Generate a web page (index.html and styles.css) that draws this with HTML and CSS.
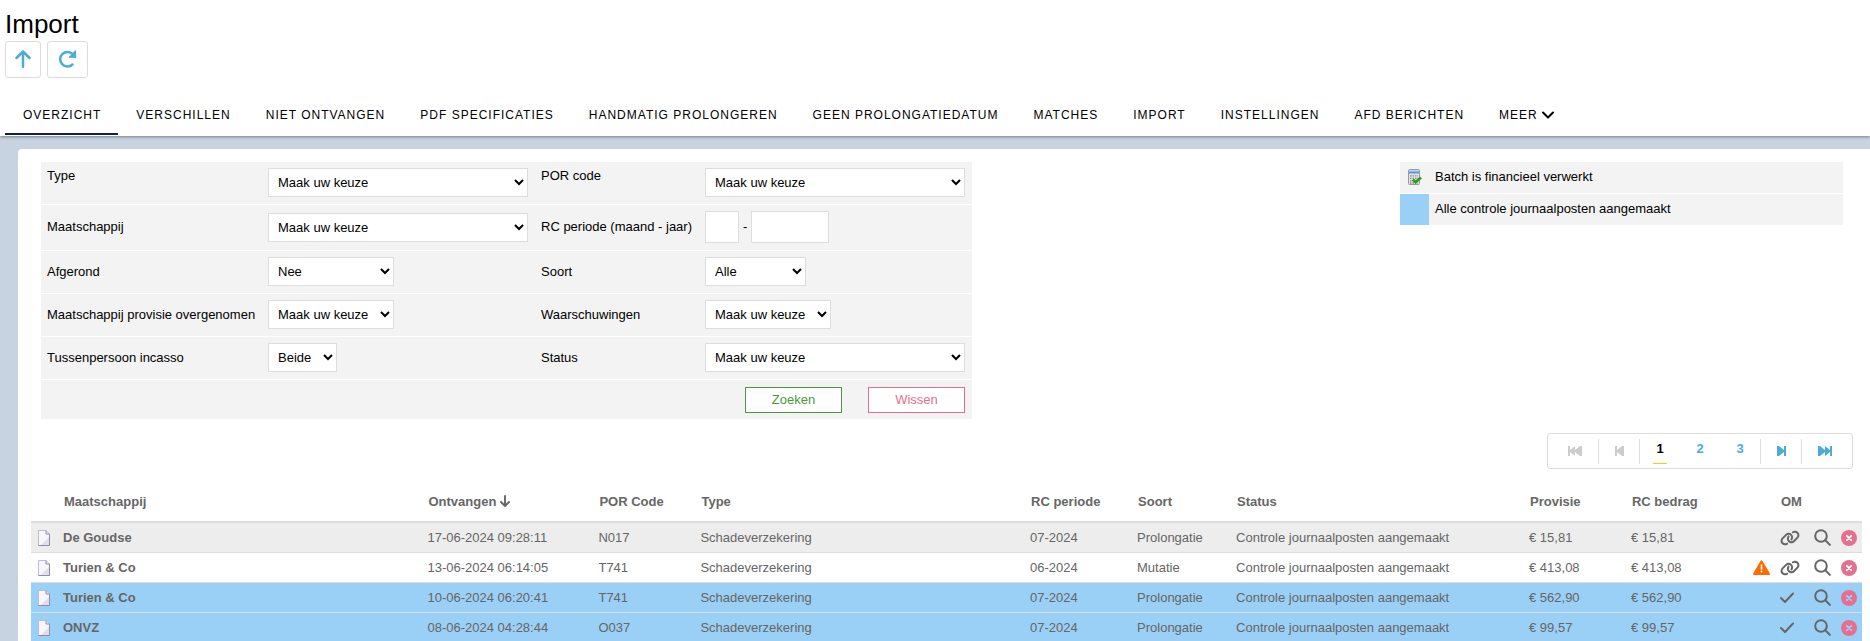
FILE: index.html
```html
<!DOCTYPE html>
<html lang="nl">
<head>
    <meta charset="UTF-8">
    <meta name="viewport" content="width=device-width, initial-scale=1.0">
    <title>Import</title>
    <link rel="stylesheet" href="styles.css">
</head>
<body>
    <svg class="symbols" aria-hidden="true">
        <symbol id="doc" viewBox="0 0 12 16">
            <path d="M.5.5h7.500l3.500 3.500v11.500H.5z" fill="#f6f6fb" stroke="#bdbbd0"/>
            <path d="M11 7v8H3z" fill="#dfdeea"/>
            <path d="M.5 15.500h11V4" fill="none" stroke="#8f8ba8"/>
            <path d="M8 .5V4h3.500" fill="none" stroke="#8f8ba8"/>
        </symbol>
        <symbol id="link" viewBox="0 0 640 512">
            <path fill="currentColor" d="M579.8 267.7c56.5-56.5 56.5-148 0-204.5c-50-50-128.8-56.5-186.3-15.4l-1.6 1.1c-14.4 10.3-17.7 30.3-7.4 44.6s30.3 17.7 44.6 7.4l1.6-1.1c32.1-22.9 76-19.3 103.8 8.6c31.5 31.5 31.5 82.5 0 114L422.3 334.8c-31.5 31.5-82.5 31.5-114 0c-27.9-27.9-31.5-71.8-8.6-103.8l1.1-1.6c10.3-14.4 6.9-34.4-7.4-44.6s-34.4-6.9-44.6 7.4l-1.1 1.6C206.5 251.2 213 330 263 380c56.5 56.5 148 56.5 204.5 0L579.8 267.7zM60.2 244.3c-56.5 56.5-56.5 148 0 204.5c50 50 128.8 56.5 186.3 15.4l1.6-1.1c14.4-10.3 17.7-30.3 7.4-44.6s-30.3-17.7-44.6-7.4l-1.6 1.1c-32.1 22.9-76 19.3-103.8-8.6C74 372 74 321 105.5 289.5L217.7 177.2c31.5-31.5 82.5-31.5 114 0c27.9 27.9 31.5 71.8 8.6 103.9l-1.1 1.6c-10.3 14.4-6.9 34.4 7.4 44.6s34.4 6.9 44.6-7.4l1.1-1.6C433.5 260.8 427 182 377 132c-56.5-56.5-148-56.5-204.5 0L60.2 244.3z"/>
        </symbol>
        <symbol id="search" viewBox="0 0 17 17">
            <g fill="none" stroke="currentColor" stroke-width="2" stroke-linecap="round">
                <circle cx="7" cy="7" r="5.8"/>
                <path d="M11.3 11.3l4.6 4.6"/>
            </g>
        </symbol>
        <symbol id="check" viewBox="0 0 14 11">
            <path d="M1 6l4 4 8-8.500" fill="none" stroke="currentColor" stroke-width="2" stroke-linecap="round" stroke-linejoin="round"/>
        </symbol>
        <symbol id="remove" viewBox="0 0 16 16">
            <circle cx="8" cy="8" r="8" fill="#e56f90"/>
            <path class="cross" d="M5.800 5.800l4.400 4.400M10.200 5.800l-4.400 4.400" stroke-width="1.800" stroke-linecap="round"/>
        </symbol>
        <symbol id="warning" viewBox="0 0 17 15">
            <path d="M8.500 1.200L16 14H1z" fill="#ff6b00" stroke="#ff6b00" stroke-width="2" stroke-linejoin="round"/>
            <path d="M8.500 5v4" stroke="#fff" stroke-width="1.600" stroke-linecap="round"/>
            <circle cx="8.500" cy="11.600" r="1" fill="#fff"/>
        </symbol>
    </svg>

    <div class="page">
        <header class="header">
            <h1>Import</h1>
            <div class="toolbar">
                <button type="button" class="tool" aria-label="Omhoog">
                    <svg width="16" height="18" viewBox="0 0 16 18"><path d="M8 16.800V1.500M1.500 8L8 1.500 14.500 8" fill="none" stroke="currentColor" stroke-width="2.500" stroke-linecap="round" stroke-linejoin="round"/></svg>
                </button>
                <button type="button" class="tool tool-wide" aria-label="Vernieuwen">
                    <svg width="19" height="18" viewBox="0 0 19 18"><path d="M14.500 14.500A7.300 7.300 0 1 1 14.800 4.200L17 6.500" fill="none" stroke="currentColor" stroke-width="2.500" stroke-linecap="round"/><path d="M17.500 1v6.200H11.500z" fill="currentColor" stroke="currentColor" stroke-width="1.200" stroke-linejoin="round"/></svg>
                </button>
            </div>
            <nav class="tabs">
                <a href="#" class="active">OVERZICHT</a>
                <a href="#">VERSCHILLEN</a>
                <a href="#">NIET ONTVANGEN</a>
                <a href="#">PDF SPECIFICATIES</a>
                <a href="#">HANDMATIG PROLONGEREN</a>
                <a href="#">GEEN PROLONGATIEDATUM</a>
                <a href="#">MATCHES</a>
                <a href="#">IMPORT</a>
                <a href="#">INSTELLINGEN</a>
                <a href="#">AFD BERICHTEN</a>
                <a href="#">MEER <svg width="12" height="8" viewBox="0 0 12 8"><path d="M1 1.500l5 5 5-5" fill="none" stroke="currentColor" stroke-width="2" stroke-linecap="round" stroke-linejoin="round"/></svg></a>
            </nav>
        </header>

        <main class="panel">
            <div class="top">
                <form class="filter">
                    <div class="row row-first">
                        <label for="type">Type</label>
                        <div><select id="type" class="wide"><option>Maak uw keuze</option></select></div>
                        <label for="por">POR code</label>
                        <div><select id="por" class="wide"><option>Maak uw keuze</option></select></div>
                    </div>
                    <div class="row">
                        <label for="maatschappij">Maatschappij</label>
                        <div><select id="maatschappij" class="wide"><option>Maak uw keuze</option></select></div>
                        <label for="maand">RC periode (maand - jaar)</label>
                        <div class="period"><input type="text" id="maand" class="month"><span>-</span><input type="text" class="year" aria-label="Jaar"></div>
                    </div>
                    <div class="row">
                        <label for="afgerond">Afgerond</label>
                        <div><select id="afgerond" class="medium"><option>Nee</option></select></div>
                        <label for="soort">Soort</label>
                        <div><select id="soort" class="small"><option>Alle</option></select></div>
                    </div>
                    <div class="row">
                        <label for="provisie">Maatschappij provisie overgenomen</label>
                        <div><select id="provisie" class="medium"><option>Maak uw keuze</option></select></div>
                        <label for="waarschuwingen">Waarschuwingen</label>
                        <div><select id="waarschuwingen" class="medium"><option>Maak uw keuze</option></select></div>
                    </div>
                    <div class="row">
                        <label for="incasso">Tussenpersoon incasso</label>
                        <div><select id="incasso" class="tiny"><option>Beide</option></select></div>
                        <label for="status">Status</label>
                        <div><select id="status" class="wide"><option>Maak uw keuze</option></select></div>
                    </div>
                    <div class="buttons">
                        <button type="button" class="btn btn-search">Zoeken</button>
                        <button type="button" class="btn btn-clear">Wissen</button>
                    </div>
                </form>

                <div class="legend">
                    <div class="legend-row">
                        <span class="legend-icon">
                            <svg width="14" height="16" viewBox="0 0 14 16">
                                <rect x=".5" y=".5" width="11" height="15" rx="1" fill="#e2e2e2" stroke="#9a9a9a"/>
                                <rect x="1" y="1" width="10" height="1.500" fill="#b9d3f2"/>
                                <rect x="1" y="2.500" width="10" height="2" fill="#5b96dc"/>
                                <path d="M2 6.800h8M2 9.300h8M2 11.800h8M2 14h8" stroke="#8a8a8a" stroke-width="1.300" stroke-dasharray="1.500 1"/>
                                <path d="M5 10.500l2.600 2.800L13 8.500" fill="none" stroke="#2f9a20" stroke-width="2.600"/>
                            </svg>
                        </span>
                        <span class="legend-text">Batch is financieel verwerkt</span>
                    </div>
                    <div class="legend-row">
                        <span class="legend-icon legend-blue"></span>
                        <span class="legend-text">Alle controle journaalposten aangemaakt</span>
                    </div>
                </div>
            </div>

            <div class="pager">
                <button type="button" class="edge" disabled aria-label="Eerste"><svg width="14" height="10" viewBox="0 0 14 10"><path d="M0 0h2v4L7 0v4l5-4h2v10h-2L7 6v4L2 6v4H0z" fill="currentColor"/></svg></button>
                <button type="button" class="step" disabled aria-label="Vorige"><svg width="9" height="10" viewBox="0 0 9 10"><path d="M0 0h2v4l5-4h2v10H7L2 6v4H0z" fill="currentColor"/></svg></button>
                <a href="#" class="current"><span>1</span></a>
                <a href="#"><span>2</span></a>
                <a href="#"><span>3</span></a>
                <button type="button" class="step" aria-label="Volgende"><svg width="9" height="10" viewBox="0 0 9 10"><path d="M9 0H7v4L2 0H0v10h2l5-4v4h2z" fill="currentColor"/></svg></button>
                <button type="button" class="edge" aria-label="Laatste"><svg width="14" height="10" viewBox="0 0 14 10"><path d="M14 0h-2v4L7 0v4L2 0H0v10h2l5-4v4l5-4v4h2z" fill="currentColor"/></svg></button>
            </div>

            <table class="results">
                <colgroup>
                    <col class="c-doc"><col><col class="c-date"><col class="c-num"><col class="c-type"><col class="c-period"><col class="c-kind"><col class="c-status"><col class="c-num"><col class="c-num"><col class="c-warn"><col class="c-om"><col class="c-search"><col class="c-remove">
                </colgroup>
                <thead>
                    <tr>
                        <th></th>
                        <th>Maatschappij</th>
                        <th>Ontvangen <svg width="10" height="12" viewBox="0 0 10 12"><path d="M5 1v10M1 7l4 4 4-4" fill="none" stroke="currentColor" stroke-width="1.900" stroke-linecap="round" stroke-linejoin="round"/></svg></th>
                        <th>POR Code</th>
                        <th>Type</th>
                        <th>RC periode</th>
                        <th>Soort</th>
                        <th>Status</th>
                        <th>Provisie</th>
                        <th>RC bedrag</th>
                        <th></th>
                        <th colspan="3">OM</th>
                    </tr>
                </thead>
                <tbody>
                    <tr class="hover">
                        <td class="doc"><svg width="12" height="16"><use href="#doc"/></svg></td>
                        <td class="name">De Goudse</td>
                        <td>17-06-2024 09:28:11</td>
                        <td>N017</td>
                        <td>Schadeverzekering</td>
                        <td>07-2024</td>
                        <td>Prolongatie</td>
                        <td>Controle journaalposten aangemaakt</td>
                        <td>€ 15,81</td>
                        <td>€ 15,81</td>
                        <td></td>
                        <td><svg width="20" height="16"><use href="#link"/></svg></td>
                        <td><svg width="17" height="17"><use href="#search"/></svg></td>
                        <td><svg width="16" height="16"><use href="#remove"/></svg></td>
                    </tr>
                    <tr>
                        <td class="doc"><svg width="12" height="16"><use href="#doc"/></svg></td>
                        <td class="name">Turien &amp; Co</td>
                        <td>13-06-2024 06:14:05</td>
                        <td>T741</td>
                        <td>Schadeverzekering</td>
                        <td>06-2024</td>
                        <td>Mutatie</td>
                        <td>Controle journaalposten aangemaakt</td>
                        <td>€ 413,08</td>
                        <td>€ 413,08</td>
                        <td class="warn"><svg width="17" height="15"><use href="#warning"/></svg></td>
                        <td><svg width="20" height="16"><use href="#link"/></svg></td>
                        <td><svg width="17" height="17"><use href="#search"/></svg></td>
                        <td><svg width="16" height="16"><use href="#remove"/></svg></td>
                    </tr>
                    <tr class="posted">
                        <td class="doc"><svg width="12" height="16"><use href="#doc"/></svg></td>
                        <td class="name">Turien &amp; Co</td>
                        <td>10-06-2024 06:20:41</td>
                        <td>T741</td>
                        <td>Schadeverzekering</td>
                        <td>07-2024</td>
                        <td>Prolongatie</td>
                        <td>Controle journaalposten aangemaakt</td>
                        <td>€ 562,90</td>
                        <td>€ 562,90</td>
                        <td></td>
                        <td><svg width="14" height="11"><use href="#check"/></svg></td>
                        <td><svg width="17" height="17"><use href="#search"/></svg></td>
                        <td><svg width="16" height="16"><use href="#remove"/></svg></td>
                    </tr>
                    <tr class="posted">
                        <td class="doc"><svg width="12" height="16"><use href="#doc"/></svg></td>
                        <td class="name">ONVZ</td>
                        <td>08-06-2024 04:28:44</td>
                        <td>O037</td>
                        <td>Schadeverzekering</td>
                        <td>07-2024</td>
                        <td>Prolongatie</td>
                        <td>Controle journaalposten aangemaakt</td>
                        <td>€ 99,57</td>
                        <td>€ 99,57</td>
                        <td></td>
                        <td><svg width="14" height="11"><use href="#check"/></svg></td>
                        <td><svg width="17" height="17"><use href="#search"/></svg></td>
                        <td><svg width="16" height="16"><use href="#remove"/></svg></td>
                    </tr>
                </tbody>
            </table>
        </main>
    </div>
</body>
</html>
```
FILE: styles.css
```css
* {
    box-sizing: border-box;
}
body {
    margin: 0;
    font-family: Arial, "Liberation Sans", sans-serif;
    font-size: 13px;
    line-height: 16px;
    color: #000;
}
button, input, select {
    font: inherit;
}
a {
    color: inherit;
    text-decoration: none;
}
.symbols {
    display: none;
}
.page {
    display: flex;
    flex-direction: column;
    height: 100vh;
    overflow: hidden;
    background-color: #c8d3e2;
}

/* header */
.header {
    flex-shrink: 0;
    padding: 8px 5px 0;
    background-color: #fff;
    box-shadow: 0 1px 3px rgba(0, 0, 0, 0.4);
}
h1 {
    margin: 0;
    font-size: 26px;
    line-height: 32px;
    font-weight: 400;
}
.toolbar {
    display: flex;
    gap: 6px;
    margin-top: 1px;
}
.tool {
    display: flex;
    align-items: center;
    justify-content: center;
    width: 36px;
    height: 37px;
    padding: 0 0 2px;
    border: 1px solid #ddd;
    border-radius: 3px;
    background-color: #fff;
    color: #4badd1;
    cursor: pointer;
}
.tool-wide {
    width: 41px;
}
.tabs {
    display: flex;
    margin-top: 17px;
    padding-bottom: 1px;
    font-size: 12px;
    letter-spacing: 1px;
}
.tabs a {
    height: 40px;
    padding: 12px 17px 0 18px;
    white-space: nowrap;
    border-bottom: 2px solid transparent;
}
.tabs a.active {
    border-bottom-color: #0f2440;
}

/* filter and legend */
.panel {
    flex: 1;
    margin: 13px 0 0 18px;
    padding: 13px 8px 0 13px;
    border-radius: 4px 0 0 0;
    background-color: #fff;
}
.top {
    display: flex;
    justify-content: space-between;
    align-items: flex-start;
    padding: 0 19px 0 10px;
}
.filter {
    background-color: #f3f3f3;
}
.row {
    display: grid;
    grid-template-columns: 221px 273px 164px 267px;
    align-items: center;
    padding: 6px 0 7px 6px;
    border-bottom: 1px solid #fff;
}
.row-first label {
    align-self: start;
}
.filter select,
.filter input {
    display: block;
    border: 1px solid #ddd;
    border-radius: 0;
    background-color: #fff;
    color: #000;
}
.filter select {
    height: 29px;
    padding: 0 5px;
}
.filter input {
    height: 32px;
    padding: 0 6px;
}
.wide {
    width: 260px;
}
.medium {
    width: 126px;
}
.small {
    width: 101px;
}
.tiny {
    width: 69px;
}
.month {
    width: 34px;
}
.year {
    width: 78px;
}
.period {
    display: flex;
    align-items: center;
    gap: 4px;
}
.buttons {
    display: flex;
    justify-content: flex-end;
    gap: 26px;
    padding: 7px 7px 6px;
}
.btn {
    width: 97px;
    height: 26px;
    padding: 0;
    border: 1px solid;
    background-color: #fff;
    cursor: pointer;
}
.btn-search {
    color: #4a9a3c;
}
.btn-clear {
    color: #e56f90;
}
.legend {
    width: 443px;
}
.legend-row {
    display: flex;
    height: 32px;
    border-bottom: 1px solid #fff;
    background-color: #f3f3f3;
}
.legend-icon {
    width: 29px;
    padding: 7px 0 0 8px;
}
.legend-blue {
    background-color: #9ad0f5;
}
.legend-text {
    padding: 7px 6px 0;
}

/* pager */
.pager {
    display: flex;
    align-items: center;
    width: max-content;
    height: 36px;
    margin: 14px 9px 0 auto;
    border: 1px solid #ddd;
    border-radius: 3px;
    font-weight: bold;
    color: #4badd1;
}
.pager button {
    display: flex;
    align-items: center;
    justify-content: center;
    height: 25px;
    padding: 0;
    border: 0 solid #ddd;
    background: none;
    color: inherit;
}
.pager button:disabled {
    color: #ccc;
    border-right-width: 1px;
}
.pager button:enabled {
    border-left-width: 1px;
}
.pager .edge {
    width: 51px;
}
.pager .edge:disabled {
    padding-left: 4px;
}
.pager .edge:enabled {
    padding-right: 4px;
}
.pager .step {
    width: 41px;
}
.pager a {
    display: flex;
    justify-content: center;
    width: 40px;
}
.pager a span {
    width: 14px;
    padding: 3px 0 6px;
    text-align: center;
    border-bottom: 1px solid transparent;
}
.pager .current {
    color: #000;
}
.pager .current span {
    border-bottom-color: #fc0;
}

/* results */
.results {
    width: 100%;
    margin-top: 14px;
    table-layout: fixed;
    border-collapse: separate;
    border-spacing: 0;
    color: #666;
}
.results th {
    height: 40px;
    padding: 0 0 0 4px;
    text-align: left;
    white-space: nowrap;
    border-bottom: 2px solid #ddd;
}
.results td {
    height: 30px;
    padding: 0 0 0 3px;
    white-space: nowrap;
    border-bottom: 1px solid #ddd;
}
.results td svg {
    display: block;
}
.results th svg {
    vertical-align: -1px;
}
.results .doc {
    padding-left: 7px;
}
.results .warn {
    padding-left: 23px;
}
.name {
    font-weight: bold;
}
.cross {
    stroke: var(--cross, #fff);
}
.hover {
    background-color: #ededed;
}
.posted {
    --cross: #9ad0f5;
    background-color: #9ad0f5;
}
.c-doc {
    width: 29px;
}
.c-date {
    width: 171px;
}
.c-num {
    width: 102px;
}
.c-type {
    width: 18%;
}
.c-period {
    width: 107px;
}
.c-kind {
    width: 99px;
}
.c-status {
    width: 16%;
}
.c-warn {
    width: 47px;
}
.c-om {
    width: 34px;
}
.c-search {
    width: 27px;
}
.c-remove {
    width: 24px;
}
```
